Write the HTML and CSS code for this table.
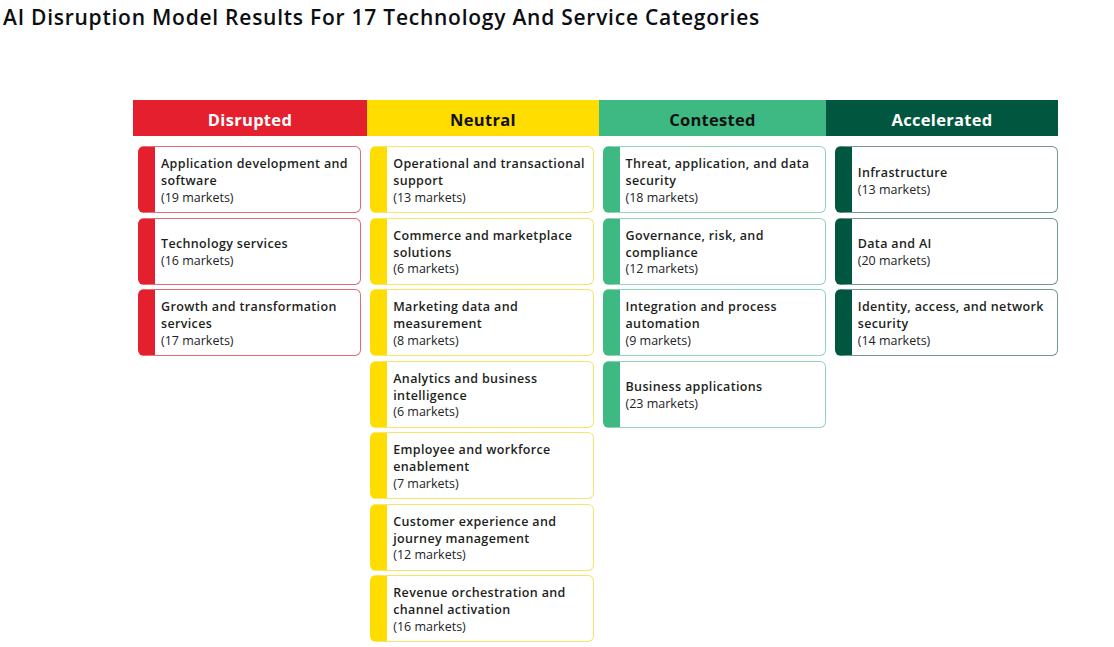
FILE: index.html
```html
<!DOCTYPE html>
<html lang="en">
<head>
<meta charset="utf-8">
<title>AI Disruption Model Results</title>
<link rel="stylesheet" href="styles.css">
</head>
<body>
<h1 class="title">AI Disruption Model Results For 17 Technology And Service Categories</h1>
<div class="chart">
  <div class="heads">
    <div class="head head-disrupted">Disrupted</div>
    <div class="head head-neutral">Neutral</div>
    <div class="head head-contested">Contested</div>
    <div class="head head-accelerated">Accelerated</div>
  </div>
  <div class="cols">
    <div class="col">
      <div class="card disrupted"><div><b>Application development and software</b><br>(19 markets)</div></div>
      <div class="card disrupted"><div><b>Technology services</b><br>(16 markets)</div></div>
      <div class="card disrupted"><div><b>Growth and transformation services</b><br>(17 markets)</div></div>
    </div>
    <div class="col">
      <div class="card neutral"><div><b>Operational and transactional support</b><br>(13 markets)</div></div>
      <div class="card neutral"><div><b>Commerce and marketplace solutions</b><br>(6 markets)</div></div>
      <div class="card neutral"><div><b>Marketing data and measurement</b><br>(8 markets)</div></div>
      <div class="card neutral"><div><b>Analytics and business intelligence</b><br>(6 markets)</div></div>
      <div class="card neutral"><div><b>Employee and workforce enablement</b><br>(7 markets)</div></div>
      <div class="card neutral"><div><b>Customer experience and journey management</b><br>(12 markets)</div></div>
      <div class="card neutral"><div><b>Revenue orchestration and channel activation</b><br>(16 markets)</div></div>
    </div>
    <div class="col">
      <div class="card contested"><div><b>Threat, application, and data security</b><br>(18 markets)</div></div>
      <div class="card contested"><div><b>Governance, risk, and compliance</b><br>(12 markets)</div></div>
      <div class="card contested"><div><b>Integration and process automation</b><br>(9 markets)</div></div>
      <div class="card contested"><div><b>Business applications</b><br>(23 markets)</div></div>
    </div>
    <div class="col">
      <div class="card accelerated"><div><b>Infrastructure</b><br>(13 markets)</div></div>
      <div class="card accelerated"><div><b>Data and AI</b><br>(20 markets)</div></div>
      <div class="card accelerated"><div><b>Identity, access, and network security</b><br>(14 markets)</div></div>
    </div>
  </div>
</div>
</body>
</html>
```

FILE: styles.css
```css
html, body {
  margin: 0;
  padding: 0;
  background: #ffffff;
}
body {
  font-family: "Open Sans", "Liberation Sans", sans-serif;
  color: #1f2224;
}
.title {
  margin: 0;
  padding: 4px 0 0 3px;
  font-size: 21px;
  line-height: 26px;
  font-weight: 600;
  letter-spacing: 0.75px;
  color: #0c0e12;
}
.chart {
  margin: 70px 0 0 133px;
  width: 925px;
}
.heads {
  display: grid;
  grid-template-columns: 234px 232px 227px 232px;
  height: 36px;
}
.head {
  display: flex;
  align-items: center;
  justify-content: center;
  font-size: 16.5px;
  font-weight: 700;
  letter-spacing: 0.3px;
  padding-top: 2px;
  box-sizing: border-box;
}
.head-disrupted { background: #e5202e; color: #ffffff; }
.head-neutral { background: #ffdd00; color: #111111; }
.head-contested { background: #3fb984; color: #111111; }
.head-accelerated { background: #00563e; color: #ffffff; }
.cols {
  display: grid;
  grid-template-columns: repeat(4, 1fr);
  column-gap: 9px;
  margin: 10px 0 0 5px;
}
.col {
  display: flex;
  flex-direction: column;
  gap: 4.5px;
}
.card {
  height: 67px;
  box-sizing: border-box;
  border: 1px solid;
  border-left-width: 17px;
  border-radius: 6px;
  display: flex;
  align-items: center;
  padding: 4px 6px 0 6px;
  font-size: 12.5px;
  line-height: 16.7px;
  color: #222426;
}
.card b {
  font-weight: 600;
  letter-spacing: 0.35px;
  color: #1d1f21;
}
.disrupted { border-color: #e06b78; border-left-color: #e5202e; }
.neutral { border-color: #f7e46a; border-left-color: #ffdd00; }
.contested { border-color: #8fd6b6; border-left-color: #3fb984; }
.accelerated { border-color: #6f9a8c; border-left-color: #00563e; }
```
